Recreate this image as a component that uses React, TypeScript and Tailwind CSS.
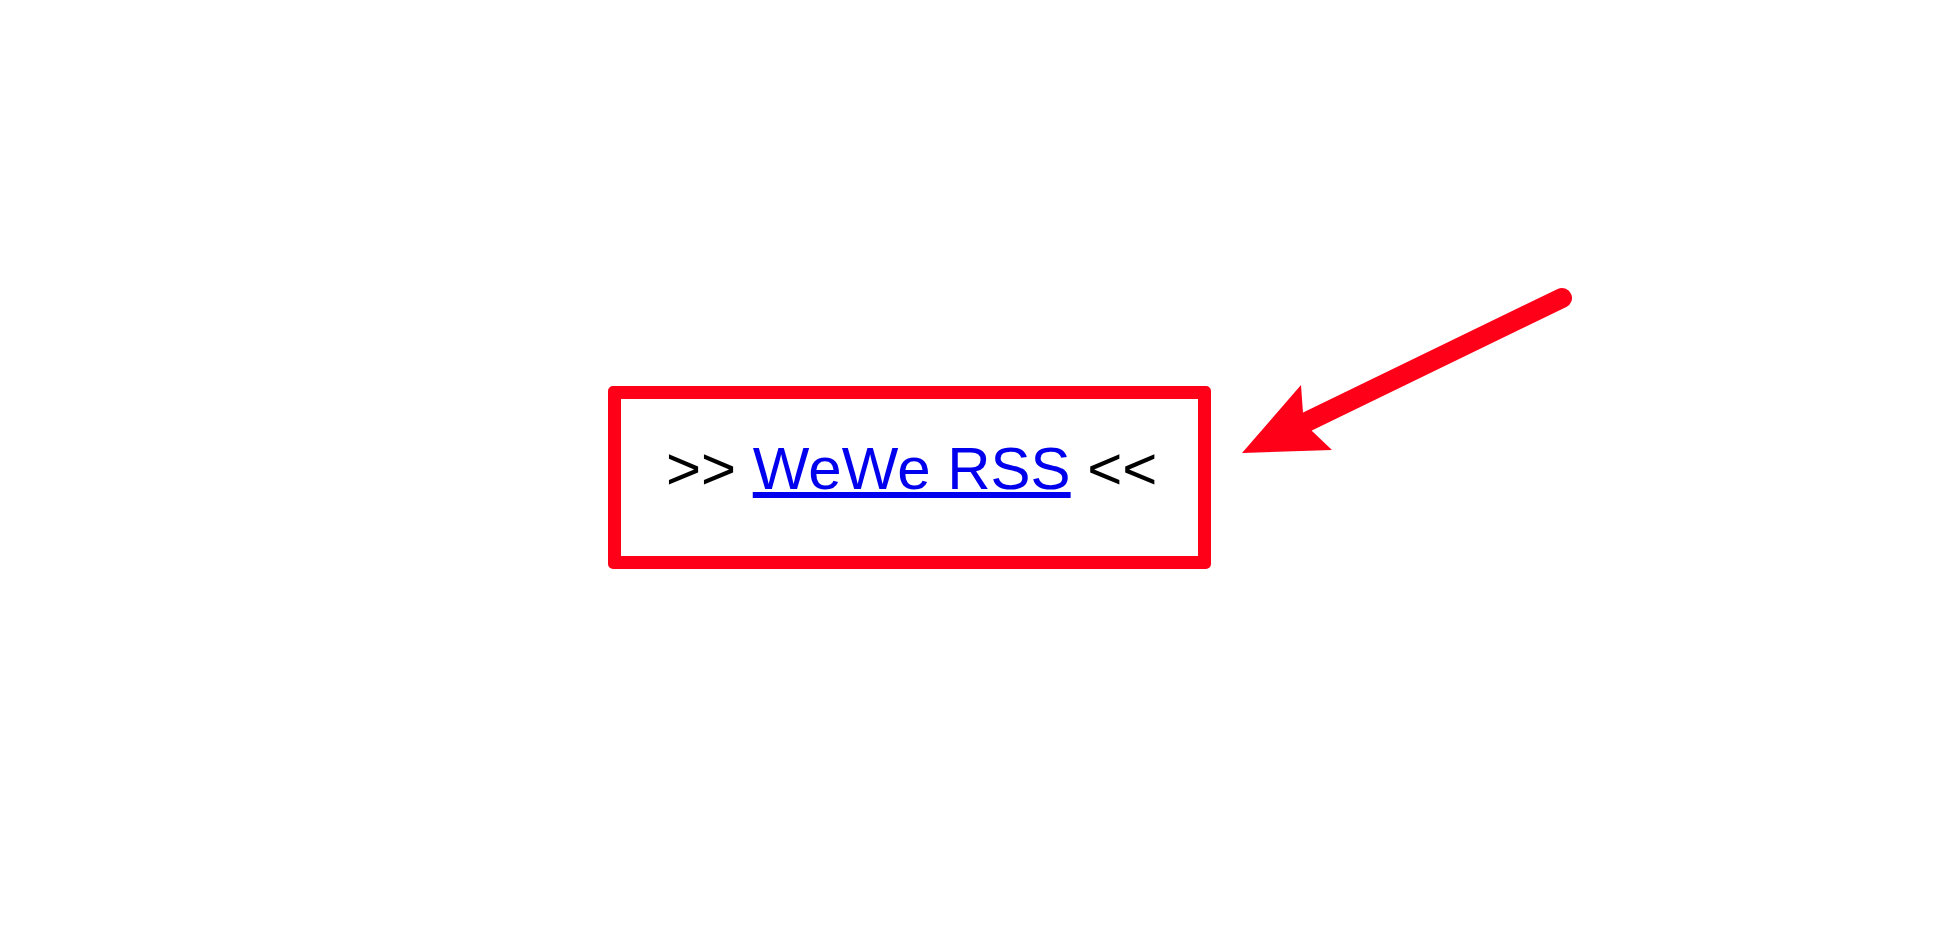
import React from "react";

const AnnotationArrow: React.FC = () => {
  return (
    <svg
      className="absolute left-0 top-0 pointer-events-none"
      width="1936"
      height="940"
      viewBox="0 0 1936 940"
    >
      <line
        x1="1562"
        y1="298"
        x2="1290"
        y2="430"
        stroke="#ff0019"
        strokeWidth="20"
        strokeLinecap="round"
      />
      <polygon
        points="1242,453 1301,385 1303,413 1312,431 1332,450"
        fill="#ff0019"
      />
    </svg>
  );
};

const App: React.FC = () => {
  return (
    <div className="relative w-[1936px] h-[940px] bg-white overflow-hidden font-['Liberation_Sans',Arial,sans-serif]">
      <div className="pt-[386px] pl-[608px]">
        <div className="w-[603px] h-[183px] border-[13px] border-[#ff0019] rounded-[5px] pt-[40px] pl-[45px]">
          <p className="text-[60px] leading-[60px] text-black whitespace-nowrap">
            {">> "}
            <a
              href="#"
              className="text-[#0000ee] underline decoration-[6px] underline-offset-[3px]"
            >
              WeWe RSS
            </a>
            {" <<"}
          </p>
        </div>
      </div>
      <AnnotationArrow />
    </div>
  );
};

export default App;
